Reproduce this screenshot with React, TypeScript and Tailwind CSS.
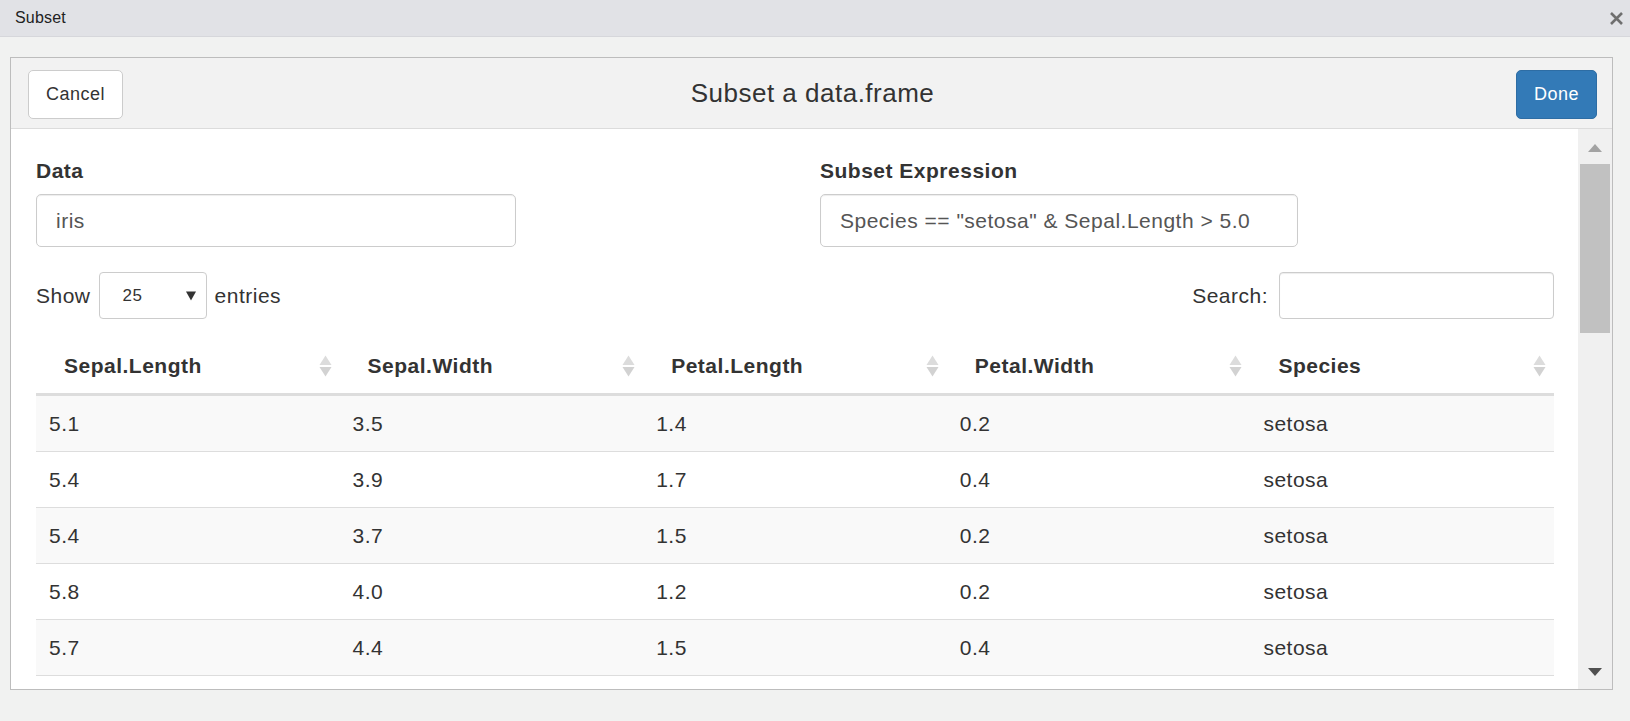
import React from 'react'

const rows = [
  ['5.1', '3.5', '1.4', '0.2', 'setosa'],
  ['5.4', '3.9', '1.7', '0.4', 'setosa'],
  ['5.4', '3.7', '1.5', '0.2', 'setosa'],
  ['5.8', '4.0', '1.2', '0.2', 'setosa'],
  ['5.7', '4.4', '1.5', '0.4', 'setosa'],
]

const columns = ['Sepal.Length', 'Sepal.Width', 'Petal.Length', 'Petal.Width', 'Species']

function SortIcon() {
  return (
    <svg width="13" height="22" viewBox="0 0 13 22" className="shrink-0">
      <polygon points="0.5,10 6.5,0.5 12.5,10" fill="#dcdcdc" />
      <polygon points="0.5,12 12.5,12 6.5,21.5" fill="#d2d2d2" />
    </svg>
  )
}

function Scrollbar() {
  return (
    <div className="flex w-[34px] shrink-0 flex-col bg-[#f0f0f0]">
      <div className="flex h-[35px] items-center justify-center pt-[3px]">
        <svg width="14" height="8" viewBox="0 0 14 8">
          <polygon points="0,8 7,0 14,8" fill="#a3a3a3" />
        </svg>
      </div>
      <div className="ml-[2px] h-[169px] w-[30px] bg-[#c1c1c1]" />
      <div className="flex-1" />
      <div className="flex h-[35px] items-center justify-center pt-[1px]">
        <svg width="14" height="8" viewBox="0 0 14 8">
          <polygon points="0,0 14,0 7,8" fill="#505050" />
        </svg>
      </div>
    </div>
  )
}

export default function App() {
  return (
    <div
      className="flex h-screen flex-col bg-[#f1f2f1] text-[#333]"
      style={{ fontFamily: '"Liberation Sans", Arial, sans-serif' }}
    >
      {/* window title bar */}
      <div className="flex h-[37px] shrink-0 items-center justify-between border-b border-[#d6d7db] bg-[#e1e2e6] pl-[15px] pr-[7px]">
        <span className="text-[16px] tracking-[0.2px] text-[#222]">Subset</span>
        <svg width="13" height="13" viewBox="0 0 13 13">
          <path d="M1 1 L12 12 M12 1 L1 12" stroke="#6f6f6f" strokeWidth="2.6" />
        </svg>
      </div>

      <div className="flex min-h-0 flex-1 flex-col pb-[31px] pl-[10px] pr-[17px] pt-[20px]">
        <div className="flex min-h-0 flex-1 flex-col border border-[#bdbdbd] bg-white">
          {/* gadget header */}
          <div className="grid h-[71px] shrink-0 grid-cols-[1fr_auto_1fr] items-start border-b border-[#dcdcdc] bg-[#f2f2f2] pl-[17px] pr-[15px]">
            <div>
              <button className="mt-[12px] h-[49px] w-[95px] rounded-[5px] border border-[#ccc] bg-white text-[18px] tracking-[0.5px] text-[#333]">
                Cancel
              </button>
            </div>
            <h1 className="self-center text-[26px] font-normal tracking-[0.5px] text-[#333]">
              Subset a data.frame
            </h1>
            <div className="flex justify-end">
              <button className="mt-[12px] h-[49px] w-[81px] rounded-[5px] border border-[#2e6da4] bg-[#337ab7] text-[18px] tracking-[0.5px] text-white">
                Done
              </button>
            </div>
          </div>

          {/* gadget content */}
          <div className="flex min-h-0 flex-1">
            <div className="min-w-0 flex-1 overflow-hidden pl-[25px] pr-[24px] pt-[30px] text-[21px] tracking-[0.5px]">
              <div className="grid grid-cols-2 gap-x-[50px]">
                <div>
                  <label className="block font-bold leading-[24px]">Data</label>
                  <div className="mt-[11px] flex h-[53px] w-[480px] items-center rounded-[5px] border border-[#ccc] pl-[19px] text-[#555] shadow-[inset_0_1px_1px_rgba(0,0,0,0.075)]">
                    iris
                  </div>
                </div>
                <div>
                  <label className="block font-bold leading-[24px]">Subset Expression</label>
                  <div className="mt-[11px] flex h-[53px] w-[478px] items-center rounded-[5px] border border-[#ccc] pl-[19px] text-[#555] shadow-[inset_0_1px_1px_rgba(0,0,0,0.075)]">
                    Species == "setosa" &amp; Sepal.Length &gt; 5.0
                  </div>
                </div>
              </div>

              {/* length + filter controls */}
              <div className="mt-[25px] flex h-[47px] items-center justify-between">
                <div className="flex items-center gap-[8px]">
                  <span>Show</span>
                  <div className="flex h-[47px] w-[108px] items-center justify-between rounded-[4px] border border-[#ccc] pl-[23px] pr-[10px] text-[17px]">
                    <span>25</span>
                    <svg width="10" height="10" viewBox="0 0 10 10">
                      <polygon points="0,0.5 10,0.5 5,9.5" fill="#333" />
                    </svg>
                  </div>
                  <span>entries</span>
                </div>
                <div className="flex items-center gap-[11px]">
                  <span>Search:</span>
                  <div className="h-[47px] w-[275px] rounded-[4px] border border-[#ccc] shadow-[inset_0_1px_1px_rgba(0,0,0,0.075)]" />
                </div>
              </div>

              {/* table */}
              <div className="mt-[19px] w-[1518px]">
                <div className="grid h-[58px] grid-cols-5 border-b-[3px] border-[#ddd]">
                  {columns.map((c) => (
                    <div key={c} className="flex items-center justify-between pl-[28px] pr-[8px] font-bold">
                      <span>{c}</span>
                      <SortIcon />
                    </div>
                  ))}
                </div>
                {rows.map((r, i) => (
                  <div
                    key={i}
                    className={`grid h-[56px] grid-cols-5 border-b border-[#ddd] ${i % 2 === 0 ? 'bg-[#f9f9f9]' : 'bg-white'}`}
                  >
                    {r.map((v, j) => (
                      <div key={j} className="flex items-center pl-[13px]">
                        {v}
                      </div>
                    ))}
                  </div>
                ))}
              </div>
            </div>
            <Scrollbar />
          </div>
        </div>
      </div>
    </div>
  )
}
